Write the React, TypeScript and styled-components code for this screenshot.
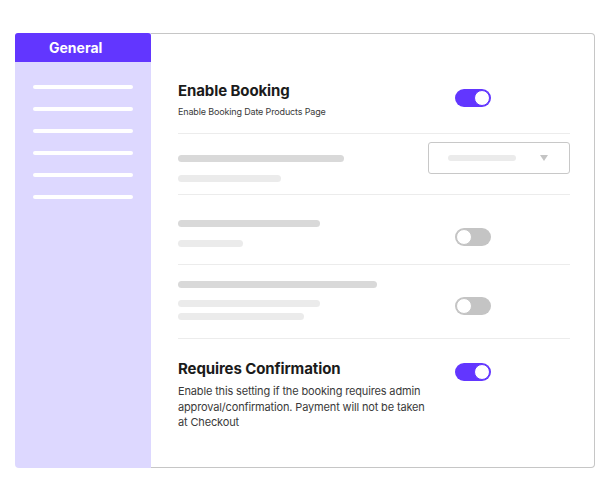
import React from "react";
import styled, { createGlobalStyle } from "styled-components";

const Global = createGlobalStyle`
  html, body { margin: 0; padding: 0; background: #ffffff; }
  body { font-family: "Inter", "Noto Sans", sans-serif; -webkit-font-smoothing: antialiased; }
  * { box-sizing: border-box; }
`;

const Page = styled.div`
  padding: 33px 15px 0 15px;
`;

const Card = styled.div`
  display: flex;
  width: 580px;
  height: 435px;
`;

const Sidebar = styled.aside`
  width: 136px;
  flex-shrink: 0;
  background: #ddd8ff;
  border-radius: 4px 0 0 4px;
  display: flex;
  flex-direction: column;
`;

const SideHeader = styled.div`
  height: 29px;
  background: #6236ff;
  border-radius: 3px 3px 0 0;
  color: #ffffff;
  font-weight: 700;
  font-size: 14px;
  line-height: 29px;
  padding-left: 34px;
`;

const SideLines = styled.div`
  display: flex;
  flex-direction: column;
  gap: 18px;
  padding: 23px 18px 0 18px;
`;

const SideLine = styled.div`
  height: 4px;
  border-radius: 2px;
  background: #ffffff;
`;

const Main = styled.main`
  flex: 1;
  border: 1px solid #c6c6c6;
  border-left: none;
  border-radius: 0 4px 4px 0;
  padding: 0 24px 0 27px;
`;

const Row = styled.div<{ $pt: number; $pb: number; $last?: boolean }>`
  display: grid;
  grid-template-columns: 1fr 142px;
  align-items: start;
  padding-top: ${(p) => p.$pt}px;
  padding-bottom: ${(p) => p.$pb}px;
  border-bottom: ${(p) => (p.$last ? "none" : "1px solid #ececec")};
`;

const TextCol = styled.div`
  display: flex;
  flex-direction: column;
`;

const Title = styled.div`
  font-size: 15px;
  line-height: 20px;
  font-weight: 700;
  color: #1b1b1b;
  letter-spacing: -0.1px;
`;

const Sub = styled.div`
  margin-top: 5px;
  font-size: 9px;
  line-height: 12px;
  color: #3a3a3a;
  letter-spacing: -0.15px;
`;

const Desc = styled.div`
  margin-top: 5px;
  font-size: 11px;
  line-height: 15.5px;
  color: #3a3a3a;
  max-width: 250px;
  letter-spacing: -0.15px;
`;

const Bar = styled.div<{ $w: number; $mt: number; $light?: boolean }>`
  width: ${(p) => p.$w}px;
  height: 7px;
  border-radius: 4px;
  margin-top: ${(p) => p.$mt}px;
  background: ${(p) => (p.$light ? "#ebebeb" : "#d9d9d9")};
`;

const ToggleTrack = styled.div<{ $on: boolean; $mt: number }>`
  margin-left: 27px;
  margin-top: ${(p) => p.$mt}px;
  width: 36px;
  height: 18px;
  border-radius: 9px;
  background: ${(p) => (p.$on ? "#6236ff" : "#c4c4c4")};
  display: flex;
  align-items: center;
  justify-content: ${(p) => (p.$on ? "flex-end" : "flex-start")};
  padding: 0 1px;
`;

const Knob = styled.div<{ $on: boolean }>`
  width: 16px;
  height: 16px;
  border-radius: 50%;
  background: #ffffff;
  border: 1px solid ${(p) => (p.$on ? "#6236ff" : "#c4c4c4")};
`;

const Select = styled.div`
  height: 32px;
  border: 1px solid #c8c8c8;
  border-radius: 3px;
  display: flex;
  align-items: center;
  justify-content: space-between;
  padding: 0 21px 0 19px;
`;

const SelectBar = styled.div`
  width: 68px;
  height: 6px;
  border-radius: 3px;
  background: #ebebeb;
`;

const Caret = styled.div`
  width: 0;
  height: 0;
  border-left: 4px solid transparent;
  border-right: 4px solid transparent;
  border-top: 6px solid #c4c4c4;
`;

const Toggle = ({ on, mt }: { on: boolean; mt: number }) => (
  <ToggleTrack $on={on} $mt={mt}>
    <Knob $on={on} />
  </ToggleTrack>
);

export default function App() {
  return (
    <>
      <Global />
      <Page>
        <Card>
          <Sidebar>
            <SideHeader>General</SideHeader>
            <SideLines>
              {Array.from({ length: 6 }).map((_, i) => (
                <SideLine key={i} />
              ))}
            </SideLines>
          </Sidebar>
          <Main>
            <Row $pt={47} $pb={15}>
              <TextCol>
                <Title>Enable Booking</Title>
                <Sub>Enable Booking Date Products Page</Sub>
              </TextCol>
              <Toggle on={true} mt={8} />
            </Row>
            <Row $pt={8} $pb={12}>
              <TextCol>
                <Bar $w={166} $mt={13} />
                <Bar $w={103} $mt={13} $light />
              </TextCol>
              <Select>
                <SelectBar />
                <Caret />
              </Select>
            </Row>
            <Row $pt={25} $pb={17}>
              <TextCol>
                <Bar $w={142} $mt={0} />
                <Bar $w={65} $mt={13} $light />
              </TextCol>
              <Toggle on={false} mt={8} />
            </Row>
            <Row $pt={16} $pb={18}>
              <TextCol>
                <Bar $w={199} $mt={0} />
                <Bar $w={142} $mt={12} $light />
                <Bar $w={126} $mt={6} $light />
              </TextCol>
              <Toggle on={false} mt={16} />
            </Row>
            <Row $pt={20} $pb={0} $last>
              <TextCol>
                <Title>Requires Confirmation</Title>
                <Desc>
                  Enable this setting if the booking requires admin
                  approval/confirmation. Payment will not be taken at Checkout
                </Desc>
              </TextCol>
              <Toggle on={true} mt={4} />
            </Row>
          </Main>
        </Card>
      </Page>
    </>
  );
}
